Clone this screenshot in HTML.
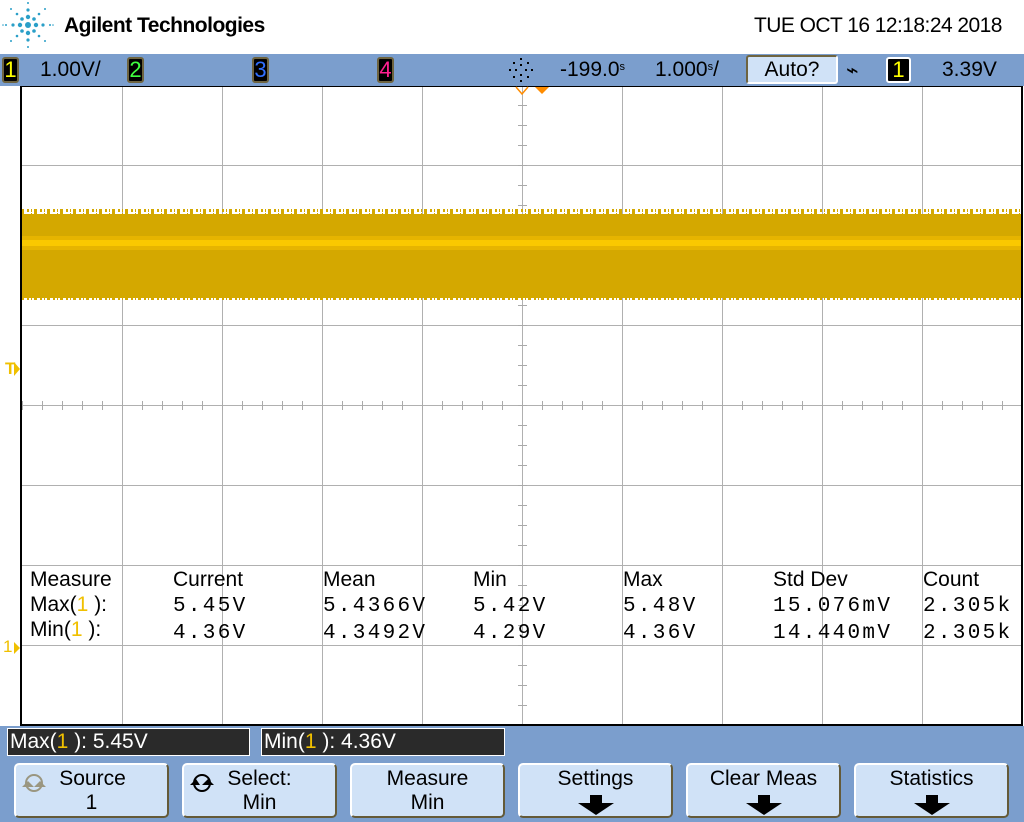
<!DOCTYPE html>
<html><head><meta charset="utf-8"><style>
*{margin:0;padding:0;box-sizing:border-box}
body{width:1024px;height:822px;background:#fff;position:relative;overflow:hidden;font-family:"Liberation Sans",sans-serif}
.a{position:absolute;white-space:nowrap}
.ch{position:absolute;top:57px;width:17px;height:26px;background:#000;border:2px solid #6e6440;border-radius:3px;font-size:22px;line-height:22px;text-align:center}
.m{font-family:"Liberation Mono","DejaVu Sans Mono",monospace;letter-spacing:2.3px}
.t{font-size:21px;color:#000}
.btn{position:absolute;top:763px;width:155px;height:55px;background:#d0e2f7;border:2px solid #645a38;border-top-color:#fff;border-left-color:#fff;border-radius:5px;text-align:center;font-size:21px;line-height:24px;padding-top:2px}
.arr{position:absolute;left:58px;top:30px}
.mb{position:absolute;top:728px;height:28px;background:#2a2a2a;border:1px solid #fff;color:#fff;font-size:21px;line-height:26px;padding-left:2px}
.y{color:#f0c000}
</style></head><body>
<svg class="a" style="left:0;top:0" width="60" height="52">
<g fill="#2a9fc8">
<circle cx="28" cy="25" r="3"/><circle cx="28" cy="17" r="2.2"/><circle cx="28" cy="33" r="2.2"/><circle cx="20" cy="25" r="2.2"/><circle cx="36" cy="25" r="2.2"/>
<circle cx="28" cy="10" r="1.6"/><circle cx="28" cy="40" r="1.6"/><circle cx="13" cy="25" r="1.6"/><circle cx="43" cy="25" r="1.6"/>
<circle cx="22" cy="19" r="1.8"/><circle cx="34" cy="19" r="1.8"/><circle cx="22" cy="31" r="1.8"/><circle cx="34" cy="31" r="1.8"/>
<circle cx="17" cy="14" r="1.3"/><circle cx="39" cy="14" r="1.3"/><circle cx="17" cy="36" r="1.3"/><circle cx="39" cy="36" r="1.3"/>
<circle cx="28" cy="3" r="1"/><circle cx="28" cy="47" r="1"/><circle cx="6" cy="25" r="1"/><circle cx="50" cy="25" r="1"/>
<circle cx="11" cy="9" r="1"/><circle cx="45" cy="9" r="1"/><circle cx="11" cy="41" r="1"/><circle cx="45" cy="41" r="1"/>
<circle cx="3" cy="25" r=".8"/><circle cx="53" cy="25" r=".8"/>
</g></svg>
<div class="a" style="left:64px;top:14px;font-size:21px;font-weight:bold;letter-spacing:-0.5px">Agilent Technologies</div>
<div class="a" style="left:754px;top:14px;font-size:21px;letter-spacing:-0.55px">TUE OCT 16 12:18:24 2018</div>

<div class="a" style="left:0;top:54px;width:1024px;height:32px;background:#7b9ecd"></div>
<div class="ch" style="left:2px;color:#ffff00">1</div>
<div class="a t" style="left:40px;top:58px">1.00V/</div>
<div class="ch" style="left:127px;color:#40ff40">2</div>
<div class="ch" style="left:252px;color:#3070ff">3</div>
<div class="ch" style="left:377px;color:#ff2090">4</div>
<svg class="a" style="left:506px;top:56px" width="32" height="30"><g fill="#000"><rect x="14" y="2" width="2" height="2"/><rect x="14" y="24" width="2" height="2"/><rect x="3" y="13" width="2" height="2"/><rect x="25" y="13" width="2" height="2"/><rect x="7" y="6" width="2" height="2"/><rect x="21" y="6" width="2" height="2"/><rect x="7" y="20" width="2" height="2"/><rect x="21" y="20" width="2" height="2"/><rect x="14" y="8" width="2" height="2"/><rect x="14" y="18" width="2" height="2"/><rect x="9" y="13" width="2" height="2"/><rect x="19" y="13" width="2" height="2"/></g></svg>
<div class="a t" style="left:560px;top:58px">-199.0<span style="font-size:11px;vertical-align:6px">s</span></div>
<div class="a t" style="left:655px;top:58px">1.000<span style="font-size:11px;vertical-align:6px">s</span>/</div>
<div class="a" style="left:746px;top:55px;width:92px;height:29px;background:#d0e2f7;border:2px solid #6e6440;border-right-color:#fff;border-bottom-color:#fff;border-radius:3px;font-size:21px;text-align:center;line-height:25px">Auto?</div>
<div class="a t" style="left:846px;top:58px">⌁</div>
<div class="ch" style="left:886px;width:25px;color:#ffff00;border-color:#fff">1</div>
<div class="a t" style="left:942px;top:58px">3.39V</div>

<svg class="a" style="left:0;top:86px" width="1024" height="641">
<defs>
<pattern id="hx" x="2" y="0" width="20" height="10" patternUnits="userSpaceOnUse"><rect x="0" y="0" width="1" height="10" fill="#aaa"/></pattern>
<pattern id="vy" x="0" y="-1" width="10" height="20" patternUnits="userSpaceOnUse"><rect x="0" y="0" width="10" height="1" fill="#aaa"/></pattern>
<pattern id="gr" x="21" y="0" width="13" height="6" patternUnits="userSpaceOnUse"><rect x="0" y="0" width="3" height="6" fill="#d4a800"/><rect x="6" y="2" width="2" height="4" fill="#d4a800"/><rect x="10" y="1" width="1" height="5" fill="#d4a800"/></pattern>
</defs>
<g fill="#b0b0b0">
<rect x="122" y="0" width="1" height="640"/><rect x="222" y="0" width="1" height="640"/><rect x="322" y="0" width="1" height="640"/><rect x="422" y="0" width="1" height="640"/><rect x="522" y="0" width="1" height="640"/><rect x="622" y="0" width="1" height="640"/><rect x="722" y="0" width="1" height="640"/><rect x="822" y="0" width="1" height="640"/><rect x="922" y="0" width="1" height="640"/>
<rect x="21" y="79" width="1000" height="1"/><rect x="21" y="159" width="1000" height="1"/><rect x="21" y="239" width="1000" height="1"/><rect x="21" y="319" width="1000" height="1"/><rect x="21" y="399" width="1000" height="1"/><rect x="21" y="479" width="1000" height="1"/><rect x="21" y="559" width="1000" height="1"/>
</g>
<rect x="22" y="315" width="1000" height="9" fill="url(#hx)"/>
<rect x="518" y="0" width="9" height="640" fill="url(#vy)"/>
<rect x="21" y="123" width="1001" height="6" fill="url(#gr)"/>
<rect x="21" y="210" width="1001" height="4" fill="url(#gr)"/>
<rect x="21" y="128" width="1001" height="84" fill="#d4a800"/>
<rect x="21" y="150" width="1001" height="14" fill="#e6b400"/>
<rect x="21" y="154" width="1001" height="6" fill="#fac800"/>
<rect x="20" y="0" width="2" height="640" fill="#000"/>
<rect x="1021" y="0" width="2" height="640" fill="#000"/>
<rect x="20" y="0" width="1003" height="1" fill="#000"/>
<rect x="20" y="638" width="1003" height="2" fill="#000"/>
<path d="M516 1 L522 8 L528 1" fill="none" stroke="#ff8c00" stroke-width="1.5"/>
<path d="M535 1 L549 1 L542 8Z" fill="#ff8c00"/>
<path d="M14 276 L20 283 L14 290Z" fill="#f0c000"/>
<path d="M14 556 L20 562 L14 568Z" fill="#f0c000"/>
</svg>
<div class="a" style="left:5px;top:359px;font-size:17px;font-weight:bold;color:#f0c000">T</div>
<div class="a" style="left:3px;top:637px;font-size:17px;color:#f0c000">1</div>

<div class="a t" style="left:30px;top:567px;line-height:25px">Measure<br>Max(<span class="y">1</span> ):<br>Min(<span class="y">1</span> ):</div>
<div class="a t" style="left:173px;top:567px;line-height:25px">Current<br><span class="m">5.45V<br>4.36V</span></div>
<div class="a t" style="left:323px;top:567px;line-height:25px">Mean<br><span class="m">5.4366V<br>4.3492V</span></div>
<div class="a t" style="left:473px;top:567px;line-height:25px">Min<br><span class="m">5.42V<br>4.29V</span></div>
<div class="a t" style="left:623px;top:567px;line-height:25px">Max<br><span class="m">5.48V<br>4.36V</span></div>
<div class="a t" style="left:773px;top:567px;line-height:25px">Std Dev<br><span class="m">15.076mV<br>14.440mV</span></div>
<div class="a t" style="left:923px;top:567px;line-height:25px">Count<br><span class="m">2.305k<br>2.305k</span></div>

<div class="a" style="left:0;top:726px;width:1024px;height:96px;background:#7b9ecd"></div>
<div class="mb" style="left:7px;width:243px">Max(<span class="y">1</span> ): 5.45V</div>
<div class="mb" style="left:261px;width:244px">Min(<span class="y">1</span> ): 4.36V</div>

<div class="btn" style="left:14px"><span style="position:relative;left:1px">Source</span><br>1<svg class="a" style="left:4px;top:6px" width="28" height="24"><circle cx="14" cy="12" r="8" fill="none" stroke="#9a9680" stroke-width="2"/><path d="M2 16 L8 10 L14 16Z M14 16 L20 10 L26 16Z" fill="#9a9680"/></svg></div>
<div class="btn" style="left:182px"><span style="position:relative;left:0px">Select:</span><br>Min<svg class="a" style="left:4px;top:6px" width="28" height="24"><circle cx="14" cy="12" r="8" fill="none" stroke="#000" stroke-width="2"/><path d="M2 14 L8 8 L12 14Z M14 14 L20 8 L26 14Z" fill="#000"/></svg></div>
<div class="btn" style="left:350px">Measure<br>Min</div>
<div class="btn" style="left:518px">Settings<svg class="arr" width="38" height="22"><path d="M12 0H24V8H36L18 20L0 8H12Z" fill="#000"/></svg></div>
<div class="btn" style="left:686px">Clear Meas<svg class="arr" width="38" height="22"><path d="M12 0H24V8H36L18 20L0 8H12Z" fill="#000"/></svg></div>
<div class="btn" style="left:854px">Statistics<svg class="arr" width="38" height="22"><path d="M12 0H24V8H36L18 20L0 8H12Z" fill="#000"/></svg></div>
</body></html>
